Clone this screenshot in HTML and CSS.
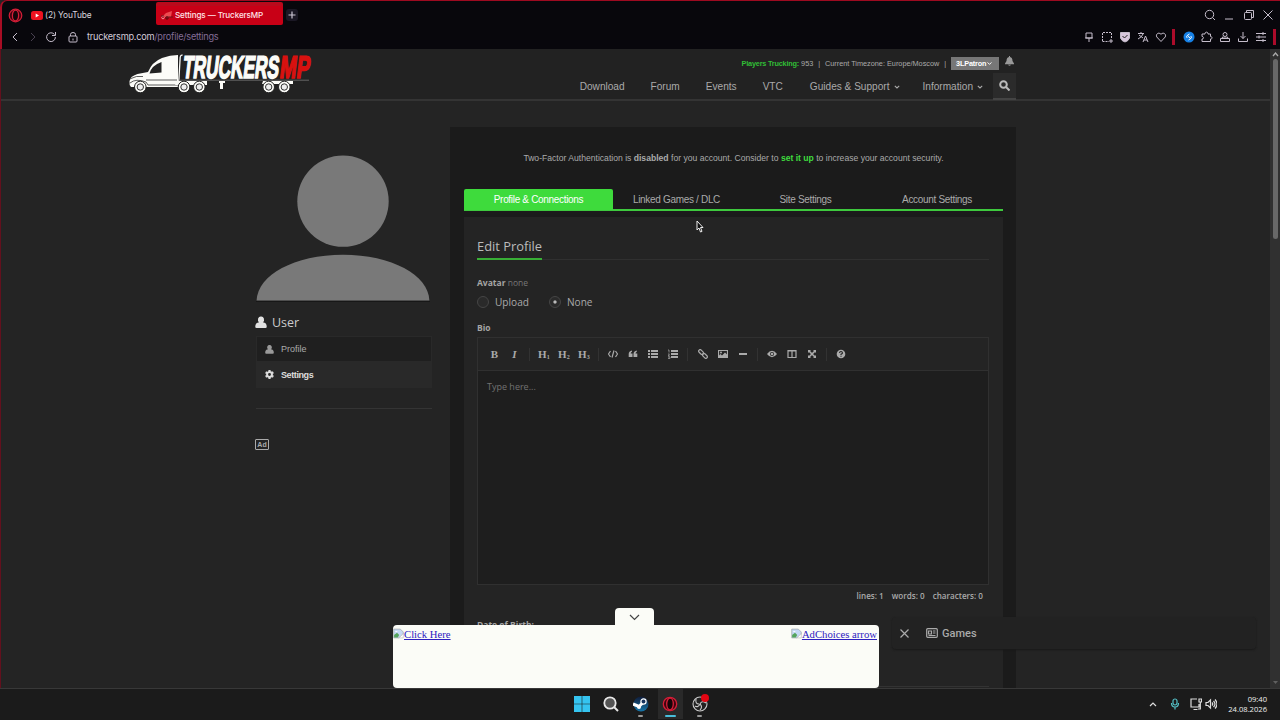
FILE: index.html
```html
<!DOCTYPE html>
<html lang="en">
<head>
  <meta charset="UTF-8">
  <meta name="viewport" content="width=device-width, initial-scale=1.0">
  <title>Settings — TruckersMP</title>
  <link rel="stylesheet" href="styles.css">
</head>
<body>
  <!-- shared icons -->
  <svg class="defs" width="0" height="0">
    <symbol id="user" viewBox="0 0 14 14"><path d="M7 0a3.300 3.700 0 0 1 2.200 6.700q4.500.300 4.500 5.300 0 1.500-1.500 1.500H1.800Q.3 13.500.3 12q0-5 4.500-5.300A3.300 3.700 0 0 1 7 0z"/></symbol>
    <symbol id="down" viewBox="0 0 8 8"><path d="M1.800 2.800 4 5l2.200-2.200" fill="none" stroke="currentColor" stroke-width="1.100"/></symbol>
    <symbol id="opera" viewBox="0 0 16 16"><circle cx="8" cy="8" r="6.700" fill="#40040f" stroke="#d51f38" stroke-width="1.300"/><ellipse cx="8" cy="8" rx="3.300" ry="5.800" fill="#160509" stroke="#d51f38" stroke-width="1.300"/></symbol>
    <symbol id="broken" viewBox="0 1 15 14"><path d="M1 2h9l4 4v3L8 14H1z" fill="#c5d9f5" stroke="#a5a8aa"/><path d="M1.500 13.500V10l4-3 3 3-2 3.500z" fill="#55a45d"/><path d="M2.500 6q2-3 4 0z" fill="#fff"/><path d="M14 8v6H8z" fill="#fff" stroke="#aaa" stroke-width=".7"/></symbol>
  </svg>

  <div class="browser">
    <div class="tabstrip">
      <svg class="opera" viewBox="0 0 16 16"><use href="#opera"/></svg>
      <div class="tab">
        <svg width="12" height="9" viewBox="0 0 12 9"><rect width="12" height="9" rx="2.500" fill="#ed1220"/><path d="m4.700 2.500 3.300 2-3.300 2z" fill="#fff"/></svg>
        <span>(2) YouTube</span>
      </div>
      <div class="tab active">
        <svg width="12" height="10" viewBox="0 0 12 10"><path d="m2 6 3-3 6-2-1 6-4 .5z" fill="#ed4a50"/><circle cx="2" cy="7.500" r="1.300" fill="none" stroke="#ffc5c5" stroke-width=".7"/><circle cx="6" cy="8" r="1.200" fill="none" stroke="#50070c"/><path d="M0 6h3m2 1h7" stroke="#6b1518"/></svg>
        <span>Settings — TruckersMP</span>
      </div>
      <div class="newtab"><svg width="8" height="8" viewBox="0 0 8 8"><path d="M4 .5v7M.5 4h7" stroke="#ccc6d4" stroke-width="1.200"/></svg></div>
      <div class="window-buttons">
        <svg viewBox="0 0 12 12"><circle cx="5.500" cy="5.500" r="4.200"/><path d="m8.500 8.500 2.500 2.500"/></svg>
        <svg viewBox="0 0 12 12"><path d="M2 10h8"/></svg>
        <svg viewBox="0 0 12 12"><rect x="1.500" y="3.500" width="7" height="7" rx="1"/><path d="M3.500 3.500v-2h7v7h-2"/></svg>
        <svg viewBox="0 0 12 12"><path d="m1.500 1.500 9 9m0-9-9 9"/></svg>
      </div>
    </div>
    <div class="addressbar">
      <div class="nav-buttons">
        <svg viewBox="0 0 12 12"><path d="M8 2 4 6l4 4"/></svg>
        <svg class="off" viewBox="0 0 12 12"><path d="m4 2 4 4-4 4"/></svg>
        <svg viewBox="0 0 12 12"><path d="M9.500 3.500A4.400 4.400 0 1 0 10.400 6M10.500 1v3.500H7"/></svg>
        <svg viewBox="0 0 12 12"><rect x="2" y="5" width="8" height="6" rx="1"/><path d="M3.500 5V3.500q0-2 2.500-2t2.500 2V5M6 7.500v2"/></svg>
      </div>
      <div class="url">truckersmp.com<span>/profile/settings</span></div>
      <div class="tools">
        <svg viewBox="0 0 12 12"><path d="M3 2h6v5H3zM2 7h8M6 7v4"/></svg>
        <svg viewBox="0 0 12 12"><path stroke-dasharray="2 1" d="M1.500 10V1.500h9V8M1.500 10.500H8"/><path d="M10 8v4M8 10h4"/></svg>
        <svg viewBox="0 0 12 12"><path d="M1.500 1.500h9V7Q9.500 10 6 11 2.500 10 1.500 7z" fill="#d8c7dd"/><path d="m3.500 5 2 2 3-3" stroke="#222"/></svg>
        <svg viewBox="0 0 12 12"><path d="M1 2.500h6M4 1v1.500M2 4l4 3M6 3Q5 6 1 8m5 3 2.500-6L11 11M7 9h3"/></svg>
        <svg viewBox="0 0 12 12"><path d="M6 10.500 1.800 6C.3 3.500 3.500.5 6 3.300 8.500.5 11.700 3.500 10.200 6z"/></svg>
        <i></i>
        <svg class="shazam" viewBox="0 0 12 12"><circle cx="6" cy="6" r="5.500" fill="#1680e6" stroke="none"/><path d="M6.500 3 4 4.700q-1 1.200.2 2.200M5.500 9 8 7.300q1-1.200-.2-2.200M5 5.300l2 1.500" stroke="#fff"/></svg>
        <svg viewBox="0 0 12 12"><path d="M1 3h3c-.5-2.500 3.500-2.500 3 0h2.500v2.500c2-.3 2 3 0 2.500v2.500H1V8c2 .2 2-2.700 0-2.500z"/></svg>
        <svg viewBox="0 0 12 12"><circle cx="6" cy="3.500" r="2"/><path d="M4 5.500 3 7h6L8 5.500M1.500 7.500h9v3h-9z"/></svg>
        <svg viewBox="0 0 12 12"><path d="M6 1v6.500M3.500 5 6 7.500 8.500 5M1.500 7.500v3h9v-3"/></svg>
        <svg viewBox="0 0 12 12"><path d="M1 2.500h10M1 6h10M1 9.500h10M8 1v3M4 4.500v3M8 8v3"/></svg>
        <i class="last"></i>
      </div>
    </div>
  </div>

  <div class="viewport">
    <div class="page">
      <header class="header">
        <svg class="logo" width="190" height="46" viewBox="0 0 190 46">
          <path d="M49 4v32H2q-2-2-1.500-6l2-4q3-2 6-3l10.500-2Q23 11 33 7q8-3 16-3z" fill="#fcfcf8"/>
          <path d="M20.500 22.500q2-8 12-11.500v10.500z" fill="#222"/>
          <path d="M2 27.500q5-3 12-2M17 29h31M1 32q6-5 16-1l2 3h30" fill="none" stroke="#333" stroke-width=".8"/>
          <path d="m49.800 30 1.400-24q.3-2 2.300-2" fill="none" stroke="#fcfcf8" stroke-width="1.300"/>
          <path d="M50 29.200h130" stroke="#666"/>
          <path d="M48 30h30v4H46zM90 30h6v2h-2v6h-3v-6h-1zM134 30h30v3h-31z" fill="#fcfcf8"/>
          <g fill="#fcfcf8" stroke="#222"><circle cx="11.300" cy="36" r="5.800"/><circle cx="55" cy="36" r="5.800"/><circle cx="70.300" cy="36" r="5.800"/><circle cx="139.700" cy="36" r="5.800"/><circle cx="155.300" cy="36" r="5.800"/></g>
          <g fill="#eee" stroke="#333"><circle cx="11.300" cy="36" r="3.200"/><circle cx="55" cy="36" r="3.200"/><circle cx="70.300" cy="36" r="3.200"/><circle cx="139.700" cy="36" r="3.200"/><circle cx="155.300" cy="36" r="3.200"/></g>
          <g class="wordmark" transform="translate(52 27) skewX(-7) scale(1 1.650)"><text x="1" textLength="96" lengthAdjust="spacingAndGlyphs">TRUCKERS</text><text class="mp" x="98" textLength="30" lengthAdjust="spacingAndGlyphs">MP</text></g>
        </svg>
        <div class="header-right">
          <div class="topbar">
            <span><b>Players Trucking:</b> 953</span><span class="bar">|</span><span>Current Timezone: Europe/Moscow</span><span class="bar">|</span>
            <span class="account">3LPatron <svg width="7" height="7"><use href="#down"/></svg></span>
            <svg class="bell" width="9" height="10" viewBox="0 0 9 10"><path d="M4 0h1v1q2.500.5 2.500 4L9 7.500v.7H0v-.7L1.500 5Q1.500 1.500 4 1zM3 8.700h3q-1.500 2-3 0z"/></svg>
          </div>
          <nav class="menu">
            <a>Download</a><a>Forum</a><a>Events</a><a>VTC</a>
            <a>Guides &amp; Support<svg width="8" height="8"><use href="#down"/></svg></a>
            <a>Information<svg width="8" height="8"><use href="#down"/></svg></a>
            <div class="search"><svg width="11" height="11" viewBox="0 0 11 11"><circle cx="4.500" cy="4.500" r="3.300"/><path d="m7 7 3.500 3.500"/></svg></div>
          </nav>
        </div>
      </header>

      <div class="content">
        <aside class="sidebar">
          <svg class="avatar" width="174" height="147" viewBox="0 0 174 147"><circle cx="87" cy="46.500" r="46"/><path d="M0 146.500C1 121 38 100.500 87 100.500s86 20.500 87 46z"/></svg>
          <h2><svg width="12" height="13"><use href="#user"/></svg>User</h2>
          <ul>
            <li><svg width="9" height="9"><use href="#user"/></svg>Profile</li>
            <li class="active"><svg width="9" height="9" viewBox="0 0 10 10"><circle cx="5" cy="5" r="2.700" fill="none" stroke="#ddd" stroke-width="2.200"/><path d="M5 0v2M5 8v2M.7 2.500l1.700 1M7.600 6.500l1.700 1M.7 7.500l1.700-1M7.600 3.500l1.700-1" stroke="#ddd" stroke-width="2.400"/></svg>Settings</li>
          </ul>
          <div class="ad-label">Ad</div>
        </aside>

        <main class="main">
          <p class="notice">Two-Factor Authentication is <b>disabled</b> for you account. Consider to <b class="green">set it up</b> to increase your account security.</p>
          <div class="tabs">
            <a class="active">Profile &amp; Connections</a><a>Linked Games / DLC</a><a>Site Settings</a><a>Account Settings</a>
          </div>
          <section class="panel">
            <div class="headline"><h3>Edit Profile</h3></div>
            <p class="label"><b>Avatar</b> none</p>
            <div class="radios">
              <label><i></i>Upload</label>
              <label><i class="checked"></i>None</label>
            </div>
            <p class="label bio"><b>Bio</b></p>
            <div class="editor">
              <div class="toolbar">
                <span class="serif">B</span><span class="serif"><em>I</em></span><hr>
                <span class="serif">H<sub>1</sub></span><span class="serif">H<sub>2</sub></span><span class="serif">H<sub>3</sub></span><hr>
                <span><svg viewBox="0 0 10 10"><path class="line" d="M2.500 2 .5 5l2 3M7.500 2l2 3-2 3M6 1.500l-2 7"/></svg></span>
                <span><svg viewBox="0 0 10 10"><path d="M.7 5Q.7 2 4 1.500v1.300Q2.700 3.200 2.700 4.500H4.500V8H.7zM5.500 5q0-3 3.300-3.500v1.300Q7.500 3.200 7.500 4.500h1.800V8H5.500z"/></svg></span>
                <span><svg viewBox="0 0 10 10"><path d="M0 1h2v2H0zm3 0h7v2H3zM0 4h2v2H0zm3 0h7v2H3zM0 7h2v2H0zm3 0h7v2H3z"/></svg></span>
                <span><svg viewBox="0 0 10 10"><path d="M3 1h7v2H3zm0 3h7v2H3zm0 3h7v2H3z"/><path class="thin" d="M0 1h1v2.500M0 5h1.500L0 7h2M0 8h2v1.500H0"/></svg></span><hr>
                <span><svg viewBox="0 0 10 10"><g class="line" transform="rotate(45 5 5)"><rect x="-.5" y="3.500" width="5.500" height="3" rx="1.500"/><rect x="5" y="3.500" width="5.500" height="3" rx="1.500"/></g></svg></span>
                <span><svg viewBox="0 0 10 10"><path class="line" d="M.5 1.500h9v7h-9z"/><circle cx="3" cy="3.500" r="1"/><path d="M1 8V6.500l1.500-1.500L4 6.500 7 3.500l2 2V8z"/></svg></span>
                <span><svg viewBox="0 0 10 10"><path d="M1 4h8v2H1z"/></svg></span><hr>
                <span><svg viewBox="0 0 10 10"><path d="M0 5q5-6.500 10 0Q5 11.500 0 5z"/><circle cx="5" cy="5" r="2" fill="#222"/><circle cx="5" cy="5" r="1.300"/></svg></span>
                <span><svg viewBox="0 0 10 10"><path class="line" d="M1 1.500h8v7H1zM1 2h8M5 1v7.500"/></svg></span>
                <span><svg viewBox="0 0 10 10"><path d="M1 1h3L1 4zM9 1H6l3 3zM1 9h3L1 6zM9 9H6l3-3z"/><path class="line thick" d="m2 2 6 6m0-6L2 8"/></svg></span><hr>
                <span><svg viewBox="0 0 10 10"><circle cx="5" cy="5" r="4.300"/><path d="M3.500 4Q3.700 2.500 5 2.500T6.500 4Q6.500 4.600 5 5.300V6M5 6.800v1" fill="none" stroke="#222" stroke-width="1.100"/></svg></span>
              </div>
              <div class="textarea">Type here...</div>
            </div>
            <div class="counts"><span>lines: 1</span><span>words: 0</span><span>characters: 0</span></div>
            <p class="label birth"><b>Date of Birth:</b></p>
            <div class="birth-input"></div>
          </section>
        </main>
      </div>
    </div>
    <div class="scrollbar">
      <svg width="7" height="5" viewBox="0 0 7 5"><path d="m1 4 2.500-3L6 4" fill="none" stroke="#aaa" stroke-width="1.300"/></svg>
      <div class="thumb"></div>
      <svg width="7" height="5" viewBox="0 0 7 5"><path d="M1 1h5L3.500 4z" fill="#606060"/></svg>
    </div>
  </div>

  <div class="games">
    <svg width="9" height="9" viewBox="0 0 9 9"><path d="m.5.5 8 8m0-8-8 8"/></svg>
    <svg width="12" height="10" viewBox="0 0 12 10"><rect x=".7" y=".7" width="10.600" height="8.600" rx="1"/><path d="M2.500 3h3v3h-3zM7 3h2.500M7 5h2.500M2.500 7.500h7"/></svg>
    <span>Games</span>
  </div>
  <div class="banner">
    <div class="collapse"><svg width="11" height="7" viewBox="0 0 11 7"><path d="m1 1 4.500 4.500L10 1" fill="none" stroke="#444" stroke-width="1.200"/></svg></div>
    <a><svg width="11" height="11"><use href="#broken"/></svg>Click Here</a>
    <a><svg width="11" height="11"><use href="#broken"/></svg>AdChoices arrow</a>
  </div>
  <svg class="cursor" width="8" height="13" viewBox="0 0 8 13"><path d="M1 1v9l2-2 1.500 4 1.500-.6L4.500 7.500H7z" fill="#111" stroke="#eee"/></svg>

  <footer class="taskbar">
    <div class="apps">
      <div><svg width="16" height="16" viewBox="0 0 16 16"><path d="M0 0h7.700v7.700H0zm8.300 0H16v7.700H8.300zM0 8.300h7.700V16H0zm8.300 0H16V16H8.300z" fill="#35c4f0"/></svg></div>
      <div><svg width="16" height="16" viewBox="0 0 16 16"><circle cx="7" cy="7" r="5.700" fill="#555" stroke="#e8e8e8" stroke-width="1.800"/><path d="m11 11 4 4" stroke="#e8e8e8" stroke-width="2"/></svg></div>
      <div class="open"><svg width="16" height="16" viewBox="0 0 16 16"><defs><linearGradient id="steam" x2="0" y2="1"><stop stop-color="#101b38"/><stop offset="1" stop-color="#1676aa"/></linearGradient></defs><circle cx="8" cy="8" r="7.500" fill="url(#steam)"/><path d="m0 8 6 2.500 4-4" stroke="#fff" stroke-width="3" fill="none"/><circle cx="10.500" cy="5.500" r="2.600" fill="#17345e" stroke="#fff" stroke-width="1.200"/><circle cx="6" cy="11" r="2" fill="#fff"/></svg></div>
      <div class="open current"><svg width="16" height="16"><use href="#opera"/></svg></div>
      <div class="open obs"><svg width="16" height="16" viewBox="0 0 16 16"><circle cx="8" cy="8" r="7" fill="#222" stroke="#ccc" stroke-width="1.100"/><path d="M7 8Q3 8 4 3m4 5q2-4 6-1M8 8q3 3 0 6M3 10q3 2 5-2" fill="none" stroke="#ccc" stroke-width="1.100"/></svg></div>
    </div>
    <div class="tray">
      <svg width="8" height="6" viewBox="0 0 8 6"><path d="m1 5 3-3 3 3"/></svg>
      <svg class="mic" width="10" height="12" viewBox="0 0 10 12"><rect x="3" y="1" width="4" height="6" rx="2"/><path d="M1.500 5q0 4 3.500 4t3.500-4M5 9v2.500"/></svg>
      <svg width="12" height="12" viewBox="0 0 12 12"><path d="M7 1H1v8h8V6M3.500 11.500h4M9 1h2.500v3H9zM10.300 4v7H8"/></svg>
      <svg width="12" height="12" viewBox="0 0 12 12"><path d="M1 4.500h2L5.500 2v8L3 7.500H1zM7 4.500q1.500 1.500 0 3M8.500 3q3 3 0 6M10 1.500q4 4.500 0 9"/></svg>
      <div class="clock">09:40<br>24.08.2026</div>
    </div>
  </footer>
</body>
</html>
```
FILE: styles.css
```css
* {
  box-sizing: border-box;
}
body {
  margin: 0;
  width: 1280px;
  height: 720px;
  overflow: hidden;
  position: relative;
  display: flex;
  flex-direction: column;
  background: #242424;
  color: #aaa;
  font-family: "Liberation Sans", Arial, sans-serif;
  font-size: 10px;
}
p, h2, h3, ul {
  margin: 0;
  padding: 0;
  font-weight: normal;
}
.defs {
  position: absolute;
}
svg {
  flex-shrink: 0;
  display: block;
}

/* browser window */
.browser {
  height: 49px;
  flex-shrink: 0;
  background: #08070c;
  border-top: 1px solid #9d0a20;
  border-left: 2px solid #a80d24;
  border-top-left-radius: 7px;
  font-family: Inter, sans-serif;
}
.tabstrip {
  display: flex;
  height: 26px;
  align-items: center;
  padding: 2px 6px 0 6px;
}
.opera {
  width: 15px;
  height: 15px;
}
.tab {
  width: 126px;
  height: 19px;
  margin-left: 8px;
  display: flex;
  align-items: center;
  gap: 2px;
  color: #d8d4dc;
  font-size: 8.400px;
  letter-spacing: -.12px;
  white-space: nowrap;
}
.tab.active {
  width: 127px;
  margin-left: -1px;
  padding-left: 5px;
  background: #c80016;
  box-shadow: 0 -4px #b90a1c;
  border-radius: 2px;
  color: #ffe4e8;
  font-size: 8.100px;
  font-weight: 500;
}
.newtab {
  width: 12px;
  height: 12px;
  margin-left: 3px;
  border-radius: 3px;
  background: #1b1825;
  display: grid;
  place-items: center;
}
.window-buttons {
  margin-left: auto;
  display: flex;
  gap: 7.500px;
}
.window-buttons svg, .nav-buttons svg, .tools svg {
  width: 12px;
  height: 12px;
  fill: none;
  stroke: #c5bdcb;
  stroke-width: 1;
}
.addressbar {
  height: 20px;
  display: flex;
  align-items: center;
  padding-left: 7px;
}
.nav-buttons {
  display: flex;
  gap: 6px;
  width: 78px;
}
.nav-buttons .off {
  stroke: #494151;
}
.nav-buttons svg:last-child {
  margin-left: 4px;
}
.url {
  margin-top: -1px;
  font-size: 9.200px;
  letter-spacing: -.25px;
  color: #d3cbd9;
}
.url span {
  color: #826c96;
}
.tools {
  margin-left: auto;
  display: flex;
  align-items: center;
  gap: 6px;
}
.tools i {
  width: 3px;
  height: 16px;
  background: #ac0b2a;
  margin: 0 2px 0 -1px;
}
.tools i.last {
  margin: 0 4px 0 0;
}

/* page */
.viewport {
  flex: 1;
  min-height: 0;
  display: flex;
}
.page {
  flex: 1;
  border-left: 1px solid #63101d;
  overflow: hidden;
}
.header {
  height: 52px;
  border-bottom: 2px solid #343434;
  background: #222;
  display: flex;
  justify-content: space-between;
  padding: 2px 254px 0 128px;
}
.logo {
  overflow: visible;
}
.wordmark {
  font: bold 19px "Liberation Sans", sans-serif;
  fill: #fcfcf8;
  stroke: #fcfcf8;
  stroke-width: 1;
}
.wordmark .mp {
  fill: #d9110f;
  stroke: #d9110f;
}
.header-right {
  display: flex;
  flex-direction: column;
}
.topbar {
  display: flex;
  align-items: center;
  justify-content: flex-end;
  height: 25px;
  padding: 1px 2px 0 0;
  font-size: 7.300px;
  color: #aaa;
  white-space: nowrap;
}
.topbar b {
  color: #31bd36;
  letter-spacing: -.2px;
}
.bar {
  margin: 0 4.900px;
}
.account {
  width: 48px;
  height: 13px;
  padding-left: 5px;
  display: flex;
  align-items: center;
  background: #777;
  color: #fff;
  font-weight: bold;
  letter-spacing: -.15px;
}
.bell {
  margin: -4px 0 0 6px;
  fill: #999;
}
.menu {
  display: flex;
  align-items: center;
  height: 25px;
  font-size: 10.100px;
}
.menu a {
  display: flex;
  align-items: center;
  margin-right: 26px;
  white-space: nowrap;
}
.menu a svg {
  margin-left: 3px;
}
.menu a:nth-child(4) {
  margin-right: 27px;
}
.menu a:nth-child(5) {
  margin-right: 22px;
}
.menu a:nth-child(6) {
  margin-right: 9px;
}
.search {
  width: 23px;
  height: 27px;
  display: grid;
  place-items: center;
  background: #2b2b2b;
  border-bottom: 2px solid #444;
}
.search svg {
  fill: none;
  stroke: #bbb;
  stroke-width: 2;
}
.content {
  display: flex;
  align-items: flex-start;
  padding: 26px 0 0 254px;
}
.sidebar {
  width: 177px;
  padding-top: 28px;
  margin-right: 18px;
}
.avatar {
  fill: #797979;
  margin-left: 1px;
  border-bottom: 1px solid #171717;
}
.sidebar h2 {
  display: flex;
  align-items: center;
  gap: 5px;
  height: 18px;
  margin-top: 11px;
  color: #ccc;
  font: 12.500px "Open Sans", sans-serif;
}
.sidebar h2 svg {
  fill: #e2e2e2;
}
.sidebar ul {
  list-style: none;
  margin-top: 5px;
  margin-left: 1px;
  padding-bottom: 20px;
  border-bottom: 1px solid #343434;
}
.sidebar li {
  height: 26px;
  display: flex;
  align-items: center;
  gap: 7px;
  padding-left: 8px;
  border: 1px solid #292929;
  background: #1f1f1f;
  font-size: 9px;
  color: #aaa;
}
.sidebar li svg {
  fill: #999;
}
.sidebar li.active {
  padding-bottom: 1px;
  background: #292929;
  color: #ddd;
  font-weight: bold;
  letter-spacing: -.4px;
}
.ad-label {
  width: 14px;
  height: 11px;
  margin-top: 30px;
  border: 1px solid #aaa;
  border-radius: 1px;
  font: bold 7px/9px "Liberation Sans", sans-serif;
  text-align: center;
}
.main {
  width: 566px;
  height: 570px;
  padding: 0 13px 0 14px;
  background: #1b1b1b;
}
.notice {
  padding-top: 24px;
  height: 62px;
  line-height: 15px;
  font-size: 8.600px;
  text-align: center;
  white-space: nowrap;
}
.green {
  color: #3fdc3e;
}
.tabs {
  display: grid;
  grid-template-columns: 149px 127px 131px 132px;
  height: 22px;
  border-bottom: 2px solid #3ec93e;
}
.tabs a {
  line-height: 21px;
  text-align: center;
  font-size: 10px;
  letter-spacing: -.32px;
}
.tabs a.active {
  background: #3edb3c;
  color: #fff;
  border-radius: 2px 2px 0 0;
}
.panel {
  margin-top: 6px;
  height: 500px;
  padding: 19px 14px 0 13px;
  background: #242424;
  font-family: "Open Sans", sans-serif;
}
.headline {
  height: 24px;
  border-bottom: 1px solid #303030;
}
.headline h3 {
  display: inline-block;
  height: 24px;
  border-bottom: 2px solid #38ae36;
  font-size: 12.900px;
  line-height: 21px;
  color: #bbb;
}
.label {
  height: 14px;
  margin-top: 16px;
  line-height: 14px;
  font-size: 8.500px;
  color: #777;
}
.label b {
  color: #a5a5a5;
}
.radios {
  display: flex;
  gap: 20px;
  margin-top: 3px;
}
.radios label {
  display: flex;
  align-items: center;
  gap: 6px;
  height: 17px;
  font-size: 10.100px;
}
.radios i {
  width: 12px;
  height: 12px;
  border: 1px solid #454545;
  border-radius: 50%;
  background: #2a2a2a;
}
.radios i.checked {
  background: radial-gradient(circle, #bbb 1px, #2a2a2a 2.200px);
}
.label.bio {
  margin-top: 11px;
}
.editor {
  margin-top: 2px;
  height: 248px;
  border: 1px solid #303030;
}
.toolbar {
  display: flex;
  align-items: center;
  height: 33px;
  padding-left: 6.500px;
  border-bottom: 1px solid #303030;
}
.toolbar span {
  width: 20px;
  display: grid;
  place-items: center;
}
.toolbar svg {
  width: 10px;
  height: 10px;
  fill: #aaa;
}
.toolbar .line, .toolbar .thin {
  fill: none;
  stroke: #aaa;
  stroke-width: 1.200;
}
.toolbar .thin {
  stroke-width: .7;
}
.toolbar .thick {
  stroke-width: 1.700;
}
.toolbar .serif {
  display: block;
  text-align: center;
  font: bold 11px "Liberation Serif", serif;
}
.toolbar sub {
  font-size: 6px;
  line-height: 0;
  vertical-align: -1px;
}
.toolbar hr {
  width: 1px;
  height: 13px;
  margin: 0 4.200px;
  border: 0;
  background: #323232;
}
.textarea {
  height: 213px;
  padding: 9px;
  background: #1e1e1e;
  color: #727272;
  font-size: 9px;
  line-height: 14px;
}
.counts {
  display: flex;
  justify-content: flex-end;
  gap: 8px;
  padding: 4px 6px 0 0;
  height: 20px;
  font-size: 8.100px;
  line-height: 14px;
  font-weight: 600;
}
.label.birth {
  margin-top: 13px;
}
.birth-input {
  margin-top: 54px;
  border-top: 1px solid #333;
}
.scrollbar {
  width: 10px;
  padding: 3px 1px;
  background: #303030;
  display: flex;
  flex-direction: column;
  align-items: center;
}
.thumb {
  width: 5px;
  height: 180px;
  margin: 2px 0 auto;
  background: #686868;
  border-radius: 3px;
}

/* floating items */
.games {
  position: absolute;
  left: 892px;
  top: 617px;
  width: 364px;
  height: 32px;
  padding-left: 8px;
  display: flex;
  align-items: center;
  background: #222;
  border-radius: 4px;
  box-shadow: 0 1px 2px #191919;
  font: 500 11px Roboto, sans-serif;
}
.games svg {
  fill: none;
  stroke: #aaa;
  stroke-width: 1.200;
}
.games svg + svg {
  margin: 0 4px 0 17px;
}
.banner {
  position: absolute;
  left: 393px;
  top: 625px;
  width: 486px;
  height: 63px;
  padding-top: 1px;
  display: flex;
  justify-content: space-between;
  background: #fbfcf7;
  border-radius: 4px;
}
.banner a {
  display: flex;
  align-items: center;
  height: 15px;
  padding-right: 2px;
  color: #2d20c0;
  font: 10.700px "Liberation Serif", serif;
  text-decoration: underline;
}
.collapse {
  position: absolute;
  left: 222px;
  top: -17px;
  width: 39px;
  height: 18px;
  display: grid;
  place-items: center;
  background: #fbfcf7;
  border-radius: 4px 4px 0 0;
}
.cursor {
  position: absolute;
  left: 696px;
  top: 220px;
}

/* taskbar */
.taskbar {
  position: relative;
  height: 32px;
  flex-shrink: 0;
  border-top: 1px solid #383838;
  background: #1b1b1b;
  display: flex;
  justify-content: space-between;
  padding: 0 13px 0 569px;
}
.apps {
  display: flex;
  gap: 4.500px;
}
.apps div {
  position: relative;
  width: 25px;
  height: 30px;
  display: grid;
  place-items: center;
}
.apps .current {
  background: #292929;
}
.apps .open::after {
  content: "";
  position: absolute;
  left: 10px;
  bottom: 2px;
  width: 5px;
  height: 2px;
  border-radius: 1px;
  background: #999;
}
.apps .current::after {
  left: 7px;
  width: 11px;
  background: #49bedb;
}
.apps .obs::before {
  content: "";
  position: absolute;
  right: 3px;
  top: 5px;
  width: 8px;
  height: 8px;
  border-radius: 50%;
  background: #e30613;
}
.tray {
  display: flex;
  align-items: center;
  height: 30px;
}
.tray svg {
  fill: none;
  stroke: #ddd;
  stroke-width: 1.200;
}
.tray .mic {
  margin: 0 10px 0 13px;
  stroke: #55c1c7;
}
.tray svg:nth-child(4) {
  margin-left: 3px;
}
.clock {
  margin-left: 11px;
  color: #eee;
  font: 7.600px/10px "Open Sans", sans-serif;
  text-align: right;
}
```
